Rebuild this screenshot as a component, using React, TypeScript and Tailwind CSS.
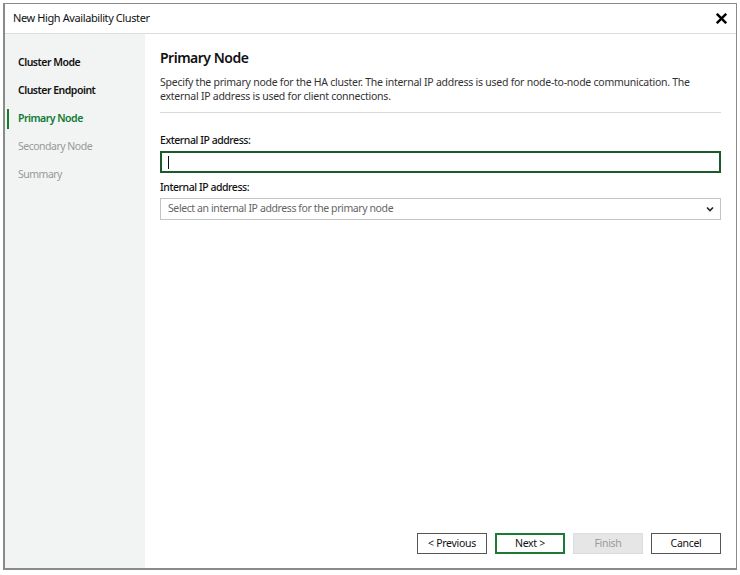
import React from "react";

const font = { fontFamily: '"Noto Sans", "Open Sans", sans-serif' };

export default function App() {
  const steps = [
    { label: "Cluster Mode", state: "done" },
    { label: "Cluster Endpoint", state: "done" },
    { label: "Primary Node", state: "active" },
    { label: "Secondary Node", state: "todo" },
    { label: "Summary", state: "todo" },
  ];
  return (
    <div className="w-[740px] h-[575px] bg-white pt-[3px] pl-[3px]" style={font}>
      <div className="w-[734px] h-[567px] border border-[#8a8a8a] border-l-2 border-b-2 flex flex-col bg-white">
        <div className="h-[30px] shrink-0 flex items-center justify-between pl-[8px] pr-[8px] border-b border-[#dcdcdc]">
          <span className="text-[11px] text-[#111] tracking-[-0.4px]">New High Availability Cluster</span>
          <svg width="11" height="11" viewBox="0 0 10 10" className="mr-[1px]">
            <path d="M1.5 1.5 L8.5 8.5 M8.5 1.5 L1.5 8.5" stroke="#000" strokeWidth="2.2" strokeLinecap="square" />
          </svg>
        </div>
        <div className="flex flex-1 min-h-0">
          <div className="w-[140px] shrink-0 bg-[#f2f3f3] pt-[15px]">
            {steps.map((s) => (
              <div key={s.label} className="h-[28px] flex items-center relative">
                {s.state === "active" && (
                  <div className="absolute left-[2px] top-[4px] w-[2px] h-[20px] bg-[#1a7a32]" />
                )}
                <span
                  className={
                    "pl-[13px] text-[10.5px] tracking-[-0.5px] " +
                    (s.state === "active"
                      ? "font-semibold text-[#0f7a34]"
                      : s.state === "done"
                      ? "font-semibold text-[#111]"
                      : "text-[#999]")
                  }
                >
                  {s.label}
                </span>
              </div>
            ))}
          </div>
          <div className="flex-1 flex flex-col pl-[15px] pr-[15px] pt-[14px] pb-[14px]">
            <div className="text-[14px] font-semibold text-[#111] leading-[20px] tracking-[-0.5px]">Primary Node</div>
            <p className="mt-[7px] text-[10.5px] leading-[14px] text-[#333] tracking-[-0.25px] pr-[10px]">
              Specify the primary node for the HA cluster. The internal IP address is used for node-to-node communication. The external IP address is used for client connections.
            </p>
            <div className="mt-[9px] h-px bg-[#d9d9d9]" />
            <label className="mt-[20px] text-[10.5px] font-medium text-[#111] leading-[14px] tracking-[-0.45px]">External IP address:</label>
            <div className="mt-[4px] h-[22px] border-2 border-[#1d5a2b] flex items-center pl-[6px]">
              <div className="w-px h-[13px] bg-[#111]" />
            </div>
            <label className="mt-[7px] text-[10.5px] font-medium text-[#111] leading-[14px] tracking-[-0.45px]">Internal IP address:</label>
            <div className="mt-[4px] h-[22px] border border-[#c4c4c4] flex items-center justify-between pl-[7px] pr-[5px]">
              <span className="text-[10.5px] text-[#666] tracking-[-0.4px]">Select an internal IP address for the primary node</span>
              <svg width="10" height="10" viewBox="0 0 10 10">
                <path d="M2 3.5 L5 6.5 L8 3.5" stroke="#222" strokeWidth="1.6" fill="none" />
              </svg>
            </div>
            <div className="flex-1" />
            <div className="flex justify-end gap-[8px] pr-0">
              <button className="w-[70px] h-[21px] border border-[#555] bg-white text-[10.5px] text-[#111] tracking-[-0.3px]">&lt; Previous</button>
              <button className="w-[70px] h-[21px] border-2 border-[#1d7a34] bg-white text-[10.5px] text-[#111] tracking-[-0.3px]">Next &gt;</button>
              <button className="w-[70px] h-[21px] border border-[#dcdcdc] bg-[#e6e6e6] text-[10.5px] text-[#9a9a9a] tracking-[-0.3px]">Finish</button>
              <button className="w-[70px] h-[21px] border border-[#555] bg-white text-[10.5px] text-[#111] tracking-[-0.3px]">Cancel</button>
            </div>
          </div>
        </div>
      </div>
    </div>
  );
}
